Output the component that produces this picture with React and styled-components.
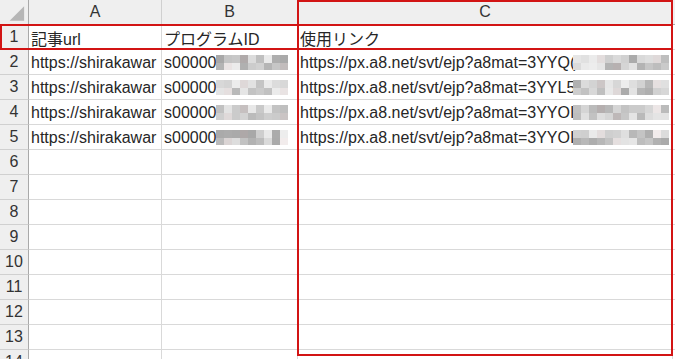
import styled, { createGlobalStyle } from "styled-components";

const GlobalStyle = createGlobalStyle`
  html, body {
    margin: 0;
    padding: 0;
    background: #ffffff;
    overflow: hidden;
  }
  body {
    font-family: "Liberation Sans", "Noto Sans CJK JP", sans-serif;
    font-size: 16px;
    color: #262626;
  }
`;

const COLS = ["29px", "133px", "136px", "375px", "1fr"];

const rows = [
  ["記事url", "プログラムID", "使用リンク"],
  ["https://shirakawar", "s00000C", "https://px.a8.net/svt/ejp?a8mat=3YYQ("],
  ["https://shirakawar", "s00000C", "https://px.a8.net/svt/ejp?a8mat=3YYL5"],
  ["https://shirakawar", "s00000C", "https://px.a8.net/svt/ejp?a8mat=3YYOI"],
  ["https://shirakawar", "s00000C", "https://px.a8.net/svt/ejp?a8mat=3YYOI"],
];

// deterministic grey shades for the blurred ids
function shades(seed, n) {
  let s = seed;
  const out = [];
  for (let i = 0; i < n; i++) {
    s = (s * 9301 + 49297) % 233280;
    const v = 168 + Math.floor((s / 233280) * 70);
    const warm = i % 7 === 3 ? 6 : 0;
    out.push(`rgb(${v + warm},${v},${v})`);
  }
  return out;
}

function App() {
  const total = 14;
  return (
    <>
      <GlobalStyle />
      <Sheet>
        <Grid>
          <Corner>
            <svg width="29" height="24" viewBox="0 0 29 24">
              <polygon points="25,6 25,21 10,21" fill="#b6b6b6" />
            </svg>
          </Corner>
          <ColHead>A</ColHead>
          <ColHead>B</ColHead>
          <ColHead>C</ColHead>
          <ColHead $blank />
          {Array.from({ length: total }).map((_, r) => {
            const data = rows[r] || ["", "", ""];
            return [
              <RowHead key={`h${r}`}>{r + 1}</RowHead>,
              <Cell key={`a${r}`}>{data[0]}</Cell>,
              <Cell key={`b${r}`}>
                {data[1]}
                {r >= 1 && r <= 4 && (
                  <Mosaic $left={54} $cols={9}>
                    {shades(r * 17 + 3, 18).map((c, i) => (
                      <Block key={i} style={{ background: c }} />
                    ))}
                  </Mosaic>
                )}
              </Cell>,
              <Cell key={`c${r}`}>
                {data[2]}
                {r >= 1 && r <= 4 && (
                  <Mosaic $left={275} $cols={12}>
                    {shades(r * 31 + 11, 24).map((c, i) => (
                      <Block key={i} style={{ background: c }} />
                    ))}
                  </Mosaic>
                )}
              </Cell>,
              <Cell key={`d${r}`} $blank />,
            ];
          })}
        </Grid>
        <RowBox />
        <ColBox />
      </Sheet>
    </>
  );
}

export default App;

const Sheet = styled.div`
  position: relative;
  width: 675px;
  height: 359px;
  overflow: hidden;
`;

const Grid = styled.div`
  display: grid;
  grid-template-columns: ${COLS.join(" ")};
  grid-auto-rows: 25px;
`;

const Corner = styled.div`
  background: #efefef;
  border-right: 1px solid #a9a9a9;
  border-bottom: 1px solid #a9a9a9;
  box-sizing: border-box;
  display: flex;
`;

const ColHead = styled.div`
  background: #efefef;
  border-right: 1px solid ${(p) => (p.$blank ? "transparent" : "#d0d0d0")};
  border-bottom: 1px solid #a9a9a9;
  box-sizing: border-box;
  display: flex;
  align-items: center;
  justify-content: center;
  font-size: 16px;
  color: #333;
`;

const RowHead = styled.div`
  background: #efefef;
  border-right: 1px solid #a9a9a9;
  border-bottom: 1px solid #d0d0d0;
  box-sizing: border-box;
  display: flex;
  align-items: center;
  justify-content: center;
  font-size: 16px;
  color: #333;
`;

const Cell = styled.div`
  position: relative;
  border-right: 1px solid ${(p) => (p.$blank ? "transparent" : "#d9d9d9")};
  border-bottom: 1px solid #d9d9d9;
  box-sizing: border-box;
  display: flex;
  align-items: center;
  padding: 1px 0 0 2px;
  white-space: nowrap;
  overflow: hidden;
`;

const Mosaic = styled.div`
  position: absolute;
  left: ${(p) => p.$left}px;
  top: 5px;
  display: grid;
  grid-template-columns: repeat(${(p) => p.$cols}, 8px);
  grid-auto-rows: 7.5px;
`;

const Block = styled.div``;

const RowBox = styled.div`
  position: absolute;
  left: 0;
  top: 24px;
  width: 673px;
  height: 26px;
  border: 2px solid #d21414;
  box-sizing: border-box;
`;

const ColBox = styled.div`
  position: absolute;
  left: 297px;
  top: 0;
  width: 376px;
  height: 356px;
  border: 2px solid #d21414;
  box-sizing: border-box;
`;
